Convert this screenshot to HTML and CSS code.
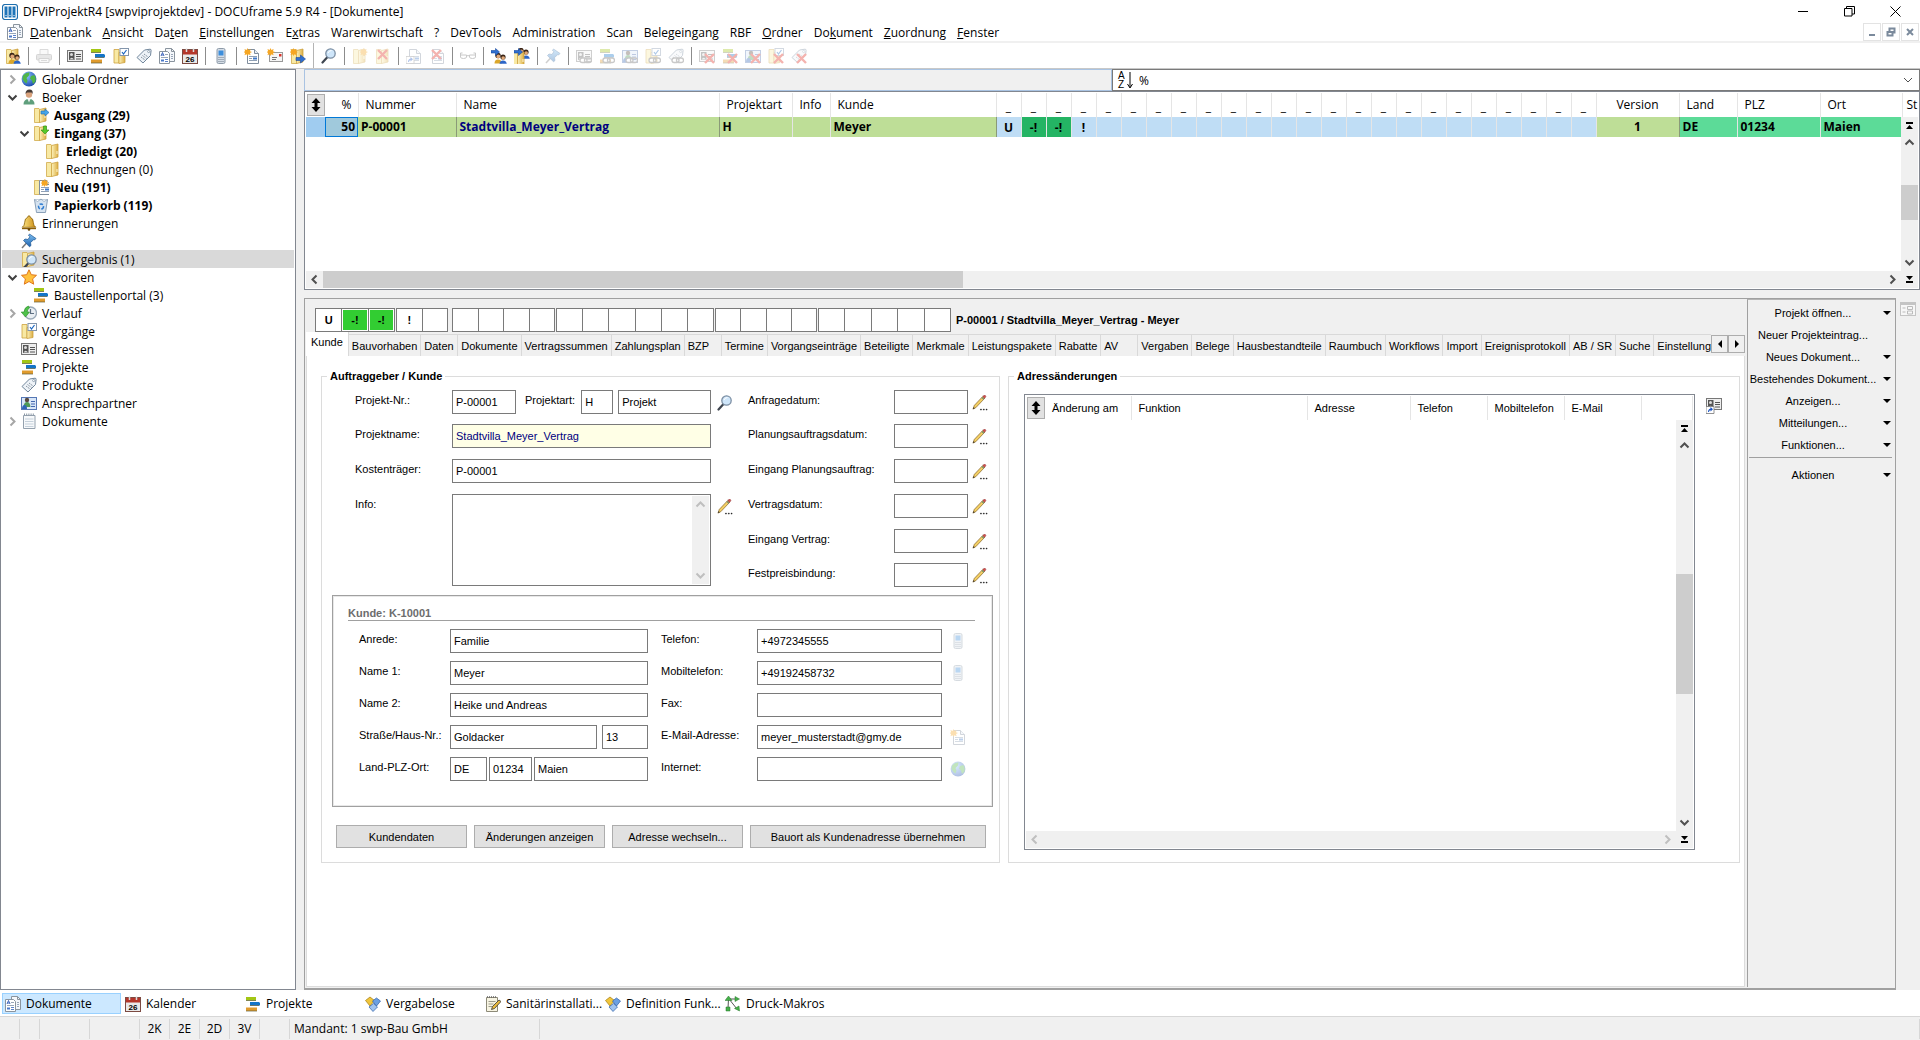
FILE: index.html
```html
<!DOCTYPE html>
<html lang="de">
<head>
  <meta charset="UTF-8">
  <meta name="viewport" content="width=device-width, initial-scale=1.0">
  <title>DFViProjektR4 [swpviprojektdev] - DOCUframe 5.9 R4 - [Dokumente]</title>
  <link rel="stylesheet" href="styles.css">
</head>
<body>

<!-- Icon set -->
<svg class="icon-set" aria-hidden="true">
  <defs>
    <linearGradient id="g-folder" x1="0" x2="1"><stop offset="0" stop-color="#fdf3bd"/><stop offset="1" stop-color="#dcae43"/></linearGradient>
    <linearGradient id="g-blue" x1="0" y1="0" x2="0" y2="1"><stop offset="0" stop-color="#7fc0f2"/><stop offset="1" stop-color="#1d62ae"/></linearGradient>
    <linearGradient id="g-gold" x1="0" x2="1"><stop offset="0" stop-color="#ffe98a"/><stop offset="1" stop-color="#c98a10"/></linearGradient>
    <radialGradient id="g-globe" cx=".35" cy=".3" r=".8"><stop offset="0" stop-color="#8cc4ff"/><stop offset="1" stop-color="#1442a8"/></radialGradient>
  </defs>
  <symbol id="app" viewBox="0 0 16 16"><rect x=".5" y=".5" width="15" height="15" rx="2.500" fill="#fff" stroke="#1f6fae" stroke-width="1.200"/><path d="M2.500 2.500h3v11h-3zM6.500 2.500h3v11h-3zM10.500 2.500h3v11h-3z" fill="#1f74b8"/><path d="M3.500 11.500h1M7.500 11.500h1M11.500 11.500h1" stroke="#fff"/></symbol>
  <symbol id="docs" viewBox="0 0 16 16"><path d="M6.500.5h6l3 3v10h-9z" fill="#f4f7fb" stroke="#8a949e"/><path d="M12.500.5v3h3" fill="none" stroke="#8a949e"/><path d="M.5 3.500h8l2 2v10H.5z" fill="#fff" stroke="#8a949e"/><path d="M2 8l1.500-3.500L5 8M2.500 7h2" fill="none" stroke="#2a55b5" stroke-width=".9"/><path d="M6 6.500h3M2 9.500h7M12 6.500h2M12 8.500h2M12 10.500h2" stroke="#9aa7b8"/><path d="M2 11.500h3v2H2z" fill="#4a78c8"/><path d="M6 11.500h3M6 13.500h3" stroke="#5b82c9"/></symbol>
  <symbol id="folder" viewBox="0 0 16 16"><path d="M1.500 1.500h4.500l1 1v13H1.500z" fill="#f8e9a4" stroke="#d2ab4b" stroke-width=".8"/><path d="M6.500 2.500L13 1v13l-6.500 1.500z" fill="url(#g-folder)" stroke="#cda240" stroke-width=".8"/><path d="M12 8v3" stroke="#fff8d8"/></symbol>
  <symbol id="check-folder" viewBox="0 0 16 16"><path d="M1 1.500h5v13.500H1z" fill="#f8e9a4" stroke="#cda240" stroke-width=".8"/><path d="M6 4.500h6v10L6 15.500z" fill="url(#g-folder)" stroke="#cda240" stroke-width=".8"/><rect x="7" y=".5" width="8.500" height="7" fill="#fff" stroke="#8395ab"/><path d="M9 4l1.500 2L13.500 2" fill="none" stroke="#1a66c0" stroke-width="1.200"/></symbol>
  <symbol id="card" viewBox="0 0 16 16"><rect x=".5" y="2.500" width="15" height="11" fill="#eee" stroke="#777"/><rect x="2" y="4" width="5.500" height="8" fill="#555"/><circle cx="4.500" cy="6.500" r="1.500" fill="#ddd"/><path d="M2.500 11.500q2-3.500 4.500 0z" fill="#ddd"/><path d="M9 6.500h5M9 8.500h5M9 11h5" stroke="#555"/></symbol>
  <symbol id="bars" viewBox="0 0 16 16"><path d="M1 1h10v3.500H1z" fill="#a3c614"/><path d="M5 6h9l1 1v2.500H5z" fill="#1475c9"/><path d="M1 11.500h11v3.500H1z" fill="#e09b2d"/><path d="M1 4.500h10M1 15h11M5 9.500h9" stroke="#5b5b3b" stroke-width=".7"/></symbol>
  <symbol id="tag" viewBox="0 0 16 16"><path d="M1 9.500L8.500 2l5.500-.8q1.200 0 1.100 1.200L14.500 7.500 7 15z" fill="#eef3f8" stroke="#71869b"/><circle cx="12.700" cy="3.500" r="1.100" fill="#fff" stroke="#71869b" stroke-width=".7"/><path d="M5 9l4 3M6.500 7.500l4 3M8 6l4 3" stroke="#7b8794" stroke-width=".9" stroke-dasharray="1.500 .7"/></symbol>
  <symbol id="calendar" viewBox="0 0 16 16"><rect x=".5" y="1.500" width="15" height="14" fill="#e9e9e9" stroke="#7c4a42"/><rect x="1" y="2" width="14" height="4.500" fill="#b5362a"/><path d="M4.500.5v3.500M11.500.5v3.500" stroke="#ddd" stroke-width="1.500"/></symbol>
  <symbol id="phone" viewBox="0 0 16 16"><rect x="4" y=".5" width="8" height="15" rx="1.500" fill="#d5dde6" stroke="#8d9aa8"/><rect x="5.500" y="2.500" width="5" height="5" fill="#3d8edb"/><path d="M5.500 9.500h5M5.500 11.500h5M5.500 13.500h5" stroke="#6c7b8b" stroke-dasharray="1 1"/></symbol>
  <symbol id="printer" viewBox="0 0 16 16"><path d="M4 1.500h8v5H4z" fill="#eee" stroke="#999"/><rect x=".5" y="6.500" width="15" height="5.500" rx="1" fill="#bbb" stroke="#888"/><path d="M3 10.500h10v4H3z" fill="#eee" stroke="#888"/><path d="M5 12.500h6" stroke="#999"/></symbol>
  <symbol id="doc" viewBox="0 0 16 16"><path d="M3.500 1.500h7l4 4v10h-11z" fill="#fff" stroke="#7f8d9d"/><path d="M10.500 1.500v4h4" fill="#e6edf5" stroke="#7f8d9d"/><path d="M5 8.500h8M5 10.500h3M5 12.500h8" stroke="#8fa0b5"/><path d="M9 9.500h4v2H9z" fill="#3f78c8"/></symbol>
  <symbol id="mail" viewBox="0 0 16 16"><rect x="2.500" y="4.500" width="13" height="9" fill="#f5f5f5" stroke="#999"/><path d="M5 9.500h5M5 11.500h4" stroke="#777"/><path d="M12 6h2.500v2.500H12z" fill="#d8342b"/></symbol>
  <symbol id="spark" viewBox="0 0 16 16"><path d="M3.500 0l.9 2L6.600.9 6 3.200l2 .8-2 .9.6 2.300-2.200-1L3.500 8l-.9-1.800-2.100 1 .6-2.300L-.5 4l1.600-.8L.5.900 2.600 2z" fill="#f5a623"/></symbol>
  <symbol id="lens" viewBox="0 0 16 16"><path d="M1.500 14.500L6.500 9" stroke="#3f4650" stroke-width="2.200" stroke-linecap="round"/><circle cx="9.500" cy="5.500" r="4.700" fill="#cfe6fa" stroke="#7b8ea3" stroke-width="1.300"/><path d="M7 5q1-2.500 3.500-2.500" fill="none" stroke="#fff"/></symbol>
  <symbol id="cross" viewBox="0 0 16 16"><path d="M3 2l9 9M12 2l-9 9" stroke="#e0281c" stroke-width="2.400"/></symbol>
  <symbol id="cross-low" viewBox="0 0 16 16"><path d="M6 6l9 9M15 6l-9 9" stroke="#e0281c" stroke-width="2.400"/></symbol>
  <symbol id="chain" viewBox="0 0 16 16"><rect x="4" y="10" width="7" height="4.500" rx="2.200" fill="#fff" stroke="#666" stroke-width="1.300"/><rect x="8.500" y="10" width="7" height="4.500" rx="2.200" fill="none" stroke="#666" stroke-width="1.300"/></symbol>
  <symbol id="arrow" viewBox="0 0 16 16"><path d="M6 9.500h4.500V7l5 4-5 4v-2.500H6z" fill="#2f6fd0" stroke="#1b4a9c" stroke-width=".6"/></symbol>
  <symbol id="arrow-top" viewBox="0 0 16 16"><path d="M0 2.500h4.500V.5L8.500 4l-4 3.500V5H0z" fill="#2f6fd0" stroke="#1b4a9c" stroke-width=".6"/></symbol>
  <symbol id="arrow-out" viewBox="0 0 16 16"><path d="M8 4h4V2l4 3.500L12 9V7H8z" fill="#46a5e8" stroke="#1d6db4" stroke-width=".6"/></symbol>
  <symbol id="arrow-in" viewBox="0 0 16 16"><path d="M10.500 1h3v4H16l-4 4-4-4h2.500z" fill="#57c92c" stroke="#318a12" stroke-width=".6"/></symbol>
  <symbol id="glasses" viewBox="0 0 16 16"><path d="M.5 7.500V5h2M15.500 7.500V5h-2M.5 7h6v2q0 1.500-3 1.500t-3-1.500zM9.500 7h6v2q0 1.500-3 1.500t-3-1.500zM6.500 8q1.500-1 3 0" fill="none" stroke="#666"/></symbol>
  <symbol id="people" viewBox="0 0 16 16"><circle cx="7" cy="7.500" r="2.700" fill="#3a2416"/><circle cx="7.300" cy="8.500" r="1.900" fill="#e0a878"/><path d="M3.500 15.500q0-4 3.500-4t4 4z" fill="#dba72b"/><circle cx="12" cy="9" r="2.600" fill="#3a2416"/><circle cx="12.200" cy="10" r="1.800" fill="#e0a878"/><path d="M8.500 15.700q.5-3.200 3.500-3.200t3.800 3.200z" fill="#2c66c8"/></symbol>
  <symbol id="pin" viewBox="0 0 16 16"><path d="M1 15l5-5.500" stroke="#777" stroke-width="1.500"/><path d="M8.500 1l6.500 4.500-1.500 1.500-1-.3-3 3 .5 2.800-1.500 1.300L2.500 7.500 4 6l3 .5L9 3.500 7.500 2.500z" fill="url(#g-blue)" stroke="#1d5590" stroke-width=".7"/></symbol>
  <symbol id="globe" viewBox="0 0 16 16"><circle cx="8" cy="8" r="7.400" fill="url(#g-globe)"/><path d="M2 4.500Q5 1 8.500 1.500L8 4.500 5.500 7l1 2.500-1 3Q3 11 1.500 8zM10 5l3.500-1q2 3 1 6.500L12 13l-1-3.500-2-2z" fill="#4fb548"/></symbol>
  <symbol id="person" viewBox="0 0 16 16"><path d="M2.500 15.500q0-5.500 5.500-5.500t5.500 5.500z" fill="#5f9f7c"/><path d="M6.500 10L8 13.500 9.500 10z" fill="#f4f4f4"/><circle cx="8" cy="5.500" r="3.200" fill="#d9a27c"/><path d="M4.500 5q0-4.500 4-4.500T11.500 5l-1-1.500H6z" fill="#453a35"/></symbol>
  <symbol id="bin" viewBox="0 0 16 16"><path d="M1.500 2.500h13l-2 13h-9z" fill="#d6e3f0" stroke="#8aa0b8"/><path d="M1.500 2.500l3 2 3.500-2.500 3 2.500 3.500-2" fill="#fff" stroke="#8aa0b8" stroke-width=".7"/><circle cx="8" cy="9.500" r="2.500" fill="none" stroke="#2b7ad0" stroke-width="1.500" stroke-dasharray="3.500 1.500"/></symbol>
  <symbol id="bell" viewBox="0 0 16 16"><path d="M8 .8q1.300 0 1.300 1.500 3 1 3 5 0 3.500 2.500 5H1.200q2.500-1.500 2.500-5 0-4 3-5Q6.700.8 8 .8z" fill="url(#g-gold)" stroke="#8c5f08" stroke-width=".8"/><path d="M1 13h14v1.200H1z" fill="#8c5f08"/><circle cx="8" cy="14.500" r="1.300" fill="#6f4a05"/></symbol>
  <symbol id="star" viewBox="0 0 16 16"><path d="M8 .8l2.300 4.900 5.200.6-3.900 3.600 1.100 5.300L8 12.500l-4.700 2.700 1.100-5.300L.5 6.300l5.200-.6z" fill="#ffc23e" stroke="#e0761a"/></symbol>
  <symbol id="history" viewBox="0 0 16 16"><circle cx="9.500" cy="8" r="6" fill="#e8edf2" stroke="#9aa9b8" stroke-width="1.300"/><path d="M9.500 4v4.500h3.500" fill="none" stroke="#5d6f82" stroke-width="1.200"/><path d="M7.500 1Q3.500 2 3 7H.2l4.300 5 4-5H6.200Q6 4.500 8.500 3z" fill="#4fc14a" stroke="#2c8a2c" stroke-width=".6"/></symbol>
  <symbol id="contact" viewBox="0 0 16 16"><rect x=".5" y="2.500" width="15" height="12" fill="#d8e6f8" stroke="#5577b5"/><path d="M10 6.500h4M10 9h4M10 11.500h4" stroke="#4468ae"/><circle cx="6" cy="5" r="2.200" fill="#5a4a40"/><path d="M2.500 12q.5-5 3.500-5t3.500 5z" fill="#4f9a55"/><path d="M1 14q0-4 2.500-4T6 14z" fill="#2f65b8"/></symbol>
  <symbol id="pad" viewBox="0 0 16 16"><path d="M2.500 2.500h11.500v13H2.500z" fill="#f7f9fb" stroke="#94a1ae"/><path d="M3 1.500h11" stroke="#8b98a5" stroke-width="2" stroke-dasharray="1 1.200"/><path d="M4 6h8.500M4 8.500h8.500M4 11h8.500M4 13.500h8.500" stroke="#b9c6d3" stroke-width=".8"/></symbol>
  <symbol id="cubes" viewBox="0 0 16 16"><path d="M5 1l4.500 3.500L5 10 .5 4.500z" fill="#f0c53a" stroke="#a27b10" stroke-width=".7"/><path d="M11.500 2l4 3-4 5-4-5z" fill="#6ba0e2" stroke="#2c5ea6" stroke-width=".7"/><path d="M8.500 7.500l4 3.500-4.500 4.500L4 11z" fill="#9fc3ee" stroke="#2c5ea6" stroke-width=".7"/></symbol>
  <symbol id="pencil" viewBox="0 0 17 17"><path d="M1 15l1.500-4L11.500 1.500l2 2L4 13.500z" fill="#f3cf63" stroke="#7d5c24" stroke-width=".7"/><path d="M11.500 1.500L13 .3q1.500-.1 1.700 1.400L13.500 3.500z" fill="#d94c4c" stroke="#8a3333" stroke-width=".6"/><path d="M10.500 2.500l2 2" stroke="#6d8a6d" stroke-width="1.200"/><path d="M1 15l.8-2 1.200 1z" fill="#222"/><path d="M9 15h1v1H9zM12 15h1v1h-1zM15 15h1v1h-1z" fill="#222" stroke="#222" stroke-width=".5"/></symbol>
  <symbol id="edit-doc" viewBox="0 0 16 16"><path d="M1.500 1.500h11v14h-11z" fill="#f7f4e2" stroke="#8d8a78"/><path d="M2 1h10" stroke="#666" stroke-width="1.500" stroke-dasharray="1 1"/><path d="M3.500 5.500h7M3.500 8h5M3.500 10.500h4" stroke="#9a9a8c"/><path d="M6.500 13.500l1-3L14 4l2 1.500-6.500 7z" fill="#e8b93c" stroke="#333" stroke-width=".8"/></symbol>
  <symbol id="macro" viewBox="0 0 16 16"><path d="M3.500 2.500L3 12.500M4 3l8 10M4 3h9" fill="none" stroke="#555"/><path d="M0 4.500L3.500 0 7 4.500zM10 .5L14.500 3 10 5.500zM9.500 12.500l5 2.500-.5-5zM1 11h4v4H1z" fill="#46b04a" stroke="#27762b" stroke-width=".5"/></symbol>
  <symbol id="shortcut" viewBox="0 0 16 16"><path d="M0 8.500h8v7H0z" fill="#fff" stroke="#777" stroke-width=".8"/><path d="M2 14q0-3 2.500-3.500V9L7 11.200 4.500 13.500V12Q3 12.500 3 14z" fill="#1c55c4"/></symbol>
  <symbol id="layout" viewBox="0 0 16 14"><rect x=".5" y=".5" width="15" height="13" fill="#f7f7f7" stroke="#c4c4c4"/><path d="M1 2h14" stroke="#c4c4c4" stroke-width="2"/><path d="M2.500 6h3M2.500 10h3" stroke="#bbb"/><path d="M7.500 4.500h5v3h-5zM7.500 9h5v3h-5z" fill="none" stroke="#bbb"/></symbol>
  <symbol id="sort" viewBox="0 0 10 14"><path d="M5 0l4.500 5H6.500v4h3L5 14 .5 9h3V5h-3z" fill="#000"/></symbol>
  <symbol id="up" viewBox="0 0 17 17"><path d="M4.500 10.500l4-4 4 4" fill="none" stroke="currentColor" stroke-width="2"/></symbol>
  <symbol id="down" viewBox="0 0 17 17"><path d="M4.500 6.500l4 4 4-4" fill="none" stroke="currentColor" stroke-width="2"/></symbol>
  <symbol id="left" viewBox="0 0 17 17"><path d="M10.500 4.500l-4 4 4 4" fill="none" stroke="currentColor" stroke-width="2"/></symbol>
  <symbol id="right" viewBox="0 0 17 17"><path d="M6.500 4.500l4 4-4 4" fill="none" stroke="currentColor" stroke-width="2"/></symbol>
  <symbol id="first" viewBox="0 0 17 17"><path d="M5 5h7v2H5zM8.500 8l3.500 4H5z" fill="#000"/></symbol>
  <symbol id="last" viewBox="0 0 17 17"><path d="M5 10h7v2H5zM8.500 9L5 5h7z" fill="#000"/></symbol>
</svg>

<div class="window">

  <header class="title-bar">
    <svg class="icon"><use href="#app"/></svg>
    <span>DFViProjektR4 [swpviprojektdev] - DOCUframe 5.9 R4 - [Dokumente]</span>
    <div class="window-buttons">
      <button aria-label="Minimieren"><svg viewBox="0 0 11 11"><path d="M0 5.500h10"/></svg></button>
      <button aria-label="Wiederherstellen"><svg viewBox="0 0 11 11"><path d="M.5 2.500h7.500v7.500H.5zM2.500 2.500V.5h8v7.500H8"/></svg></button>
      <button aria-label="Schließen"><svg viewBox="0 0 11 11"><path d="M.5.500l10 10M10.500.500l-10 10"/></svg></button>
    </div>
  </header>

  <nav class="menu-bar">
    <svg class="icon"><use href="#docs"/></svg>
    <button><u>D</u>atenbank</button>
    <button><u>A</u>nsicht</button>
    <button>Da<u>t</u>en</button>
    <button><u>E</u>instellungen</button>
    <button>E<u>x</u>tras</button>
    <button>Warenwirtschaft</button>
    <button>?</button>
    <button>DevTools</button>
    <button>Administration</button>
    <button>Scan</button>
    <button>Belegeingang</button>
    <button>RBF</button>
    <button><u>O</u>rdner</button>
    <button>Do<u>k</u>ument</button>
    <button><u>Z</u>uordnung</button>
    <button><u>F</u>enster</button>
    <div class="child-buttons">
      <button aria-label="Fenster minimieren"><svg viewBox="0 0 10 10"><path d="M2 8h6"/></svg></button>
      <button aria-label="Fenster wiederherstellen"><svg viewBox="0 0 10 10"><path d="M1.500 5h5v3.500h-5zM3.500 4V1.500h5v4H7.500"/></svg></button>
      <button aria-label="Fenster schließen"><svg viewBox="0 0 10 10"><path d="M2 2l6 6M8 2L2 8"/></svg></button>
    </div>
  </nav>

  <div class="toolbar">
    <button aria-label="Benutzer"><svg class="icon"><use href="#folder"/><use href="#people"/></svg></button>
    <hr>
    <button aria-label="Drucken" disabled><svg class="icon"><use href="#printer"/></svg></button>
    <hr>
    <button aria-label="Adressen"><svg class="icon"><use href="#card"/></svg></button>
    <button aria-label="Projekte"><svg class="icon"><use href="#bars"/></svg></button>
    <button aria-label="Vorgänge"><svg class="icon"><use href="#check-folder"/></svg></button>
    <button aria-label="Produkte"><svg class="icon"><use href="#tag"/></svg></button>
    <button aria-label="Dokumente"><svg class="icon"><use href="#docs"/></svg></button>
    <button aria-label="Kalender"><svg class="icon calendar" viewBox="0 0 16 16"><use href="#calendar"/><text x="8" y="14">26</text></svg></button>
    <hr>
    <button aria-label="Telefon"><svg class="icon"><use href="#phone"/></svg></button>
    <hr>
    <button aria-label="Neues Dokument"><svg class="icon"><use href="#doc"/><use href="#spark"/></svg></button>
    <button aria-label="Neue E-Mail"><svg class="icon"><use href="#mail"/><use href="#spark"/></svg></button>
    <button aria-label="Neuer Vorgang"><svg class="icon"><use href="#folder"/><use href="#spark"/><use href="#arrow"/></svg></button>
    <hr class="tall">
    <button aria-label="Suchen"><svg class="icon"><use href="#lens"/></svg></button>
    <hr>
    <button aria-label="Neuer Ordner" disabled><svg class="icon"><use href="#folder"/><use href="#spark" x="8"/></svg></button>
    <button aria-label="Ordner löschen" disabled><svg class="icon"><use href="#folder"/><use href="#cross"/></svg></button>
    <hr>
    <button aria-label="Verknüpfung" disabled><svg class="icon"><use href="#doc"/><use href="#shortcut"/></svg></button>
    <button aria-label="Dokument löschen" disabled><svg class="icon"><use href="#doc"/><use href="#cross"/></svg></button>
    <hr>
    <button aria-label="Ansehen" disabled><svg class="icon"><use href="#glasses"/></svg></button>
    <hr>
    <button aria-label="Weiterleiten"><svg class="icon"><use href="#people"/><use href="#arrow-top"/></svg></button>
    <button aria-label="Verteilen"><svg class="icon"><use href="#people" y="-5"/><use href="#folder" x="-3" y="3"/><use href="#arrow-top"/></svg></button>
    <hr>
    <button aria-label="Anheften" disabled><svg class="icon"><use href="#pin"/></svg></button>
    <hr>
    <button aria-label="Adresse zuordnen" disabled><svg class="icon"><use href="#card"/><use href="#chain"/></svg></button>
    <button aria-label="Projekt zuordnen" disabled><svg class="icon"><use href="#bars"/><use href="#chain"/></svg></button>
    <button aria-label="Ansprechpartner zuordnen" disabled><svg class="icon"><use href="#contact"/><use href="#chain"/></svg></button>
    <button aria-label="Vorgang zuordnen" disabled><svg class="icon"><use href="#check-folder"/><use href="#chain"/></svg></button>
    <button aria-label="Produkt zuordnen" disabled><svg class="icon"><use href="#tag"/><use href="#chain"/></svg></button>
    <hr>
    <button aria-label="Adresse lösen" disabled><svg class="icon"><use href="#card"/><use href="#cross-low"/></svg></button>
    <button aria-label="Projekt lösen" disabled><svg class="icon"><use href="#bars"/><use href="#cross-low"/></svg></button>
    <button aria-label="Ansprechpartner lösen" disabled><svg class="icon"><use href="#contact"/><use href="#cross-low"/></svg></button>
    <button aria-label="Vorgang lösen" disabled><svg class="icon"><use href="#check-folder"/><use href="#cross-low"/></svg></button>
    <button aria-label="Produkt lösen" disabled><svg class="icon"><use href="#tag"/><use href="#cross-low"/></svg></button>
  </div>

  <main class="workspace">

    <ul class="tree">
      <li><svg class="twist closed"><use href="#right"/></svg><svg class="icon"><use href="#globe"/></svg><a href="#">Globale Ordner</a></li>
      <li><svg class="twist"><use href="#down"/></svg><svg class="icon"><use href="#person"/></svg><a href="#">Boeker</a></li>
      <li class="level-2 unread"><span class="twist"></span><svg class="icon"><use href="#folder"/><use href="#arrow-out"/></svg><a href="#">Ausgang (29)</a></li>
      <li class="level-2 unread"><svg class="twist"><use href="#down"/></svg><svg class="icon"><use href="#folder"/><use href="#arrow-in"/></svg><a href="#">Eingang (37)</a></li>
      <li class="level-3 unread"><span class="twist"></span><svg class="icon"><use href="#folder"/></svg><a href="#">Erledigt (20)</a></li>
      <li class="level-3"><span class="twist"></span><svg class="icon"><use href="#folder"/></svg><a href="#">Rechnungen (0)</a></li>
      <li class="level-2 unread"><span class="twist"></span><svg class="icon"><use href="#folder"/><use href="#doc" x="3"/><use href="#spark" x="8"/></svg><a href="#">Neu (191)</a></li>
      <li class="level-2 unread"><span class="twist"></span><svg class="icon"><use href="#bin"/></svg><a href="#">Papierkorb (119)</a></li>
      <li><span class="twist"></span><svg class="icon"><use href="#bell"/></svg><a href="#">Erinnerungen</a></li>
      <li><span class="twist"></span><svg class="icon"><use href="#pin"/></svg></li>
      <li class="selected"><span class="twist"></span><svg class="icon"><use href="#folder"/><use href="#lens" x="1" y="3"/></svg><a href="#">Suchergebnis (1)</a></li>
      <li><svg class="twist"><use href="#down"/></svg><svg class="icon"><use href="#star"/></svg><a href="#">Favoriten</a></li>
      <li class="level-2"><span class="twist"></span><svg class="icon"><use href="#bars"/></svg><a href="#">Baustellenportal (3)</a></li>
      <li><svg class="twist closed"><use href="#right"/></svg><svg class="icon"><use href="#history"/></svg><a href="#">Verlauf</a></li>
      <li><span class="twist"></span><svg class="icon"><use href="#check-folder"/></svg><a href="#">Vorgänge</a></li>
      <li><span class="twist"></span><svg class="icon"><use href="#card"/></svg><a href="#">Adressen</a></li>
      <li><span class="twist"></span><svg class="icon"><use href="#bars"/></svg><a href="#">Projekte</a></li>
      <li><span class="twist"></span><svg class="icon"><use href="#tag"/></svg><a href="#">Produkte</a></li>
      <li><span class="twist"></span><svg class="icon"><use href="#contact"/></svg><a href="#">Ansprechpartner</a></li>
      <li><svg class="twist closed"><use href="#right"/></svg><svg class="icon"><use href="#pad"/></svg><a href="#">Dokumente</a></li>
    </ul>

    <section class="content">

      <div class="filter-row">
        <div class="filter-info"></div>
        <div class="sort-box">
          <div class="az"><span>A</span><span>Z</span></div>
          <svg class="az-arrow" viewBox="0 0 6 18"><path d="M3 1v15M.5 13L3 17l2.500-4"/></svg>
          <select aria-label="Sortierung"><option>%</option></select>
          <svg class="chevron" viewBox="0 0 10 6"><path d="M1 1l4 4 4-4"/></svg>
        </div>
      </div>

      <div class="list results">
        <table>
          <colgroup>
            <col class="c-sort"><col class="c-percent"><col class="c-number"><col class="c-name"><col class="c-type"><col class="c-info"><col class="c-customer">
            <col class="c-flag" span="24">
            <col class="c-version"><col class="c-country"><col class="c-zip"><col class="c-city"><col>
          </colgroup>
          <thead>
            <tr>
              <th class="sort"><button aria-label="Sortieren"><svg><use href="#sort"/></svg></button></th>
              <th class="right">%</th><th>Nummer</th><th>Name</th><th>Projektart</th><th>Info</th><th>Kunde</th>
              <th class="flag">_</th><th class="flag">_</th><th class="flag">_</th><th class="flag">_</th><th class="flag">_</th><th class="flag">_</th>
              <th class="flag">_</th><th class="flag">_</th><th class="flag">_</th><th class="flag">_</th><th class="flag">_</th><th class="flag">_</th>
              <th class="flag">_</th><th class="flag">_</th><th class="flag">_</th><th class="flag">_</th><th class="flag">_</th><th class="flag">_</th>
              <th class="flag">_</th><th class="flag">_</th><th class="flag">_</th><th class="flag">_</th><th class="flag">_</th><th class="flag">_</th>
              <th class="center">Version</th><th>Land</th><th>PLZ</th><th>Ort</th><th class="cut">St</th>
            </tr>
          </thead>
          <tbody>
            <tr>
              <td class="marker"></td>
              <td class="focused">50</td>
              <td class="edge">P-00001</td>
              <td class="edge project-name">Stadtvilla_Meyer_Vertrag</td>
              <td>H</td>
              <td></td>
              <td class="edge">Meyer</td>
              <td class="flag">U</td><td class="flag on">-!</td><td class="flag on">-!</td><td class="flag">!</td><td class="flag"></td><td class="flag"></td>
              <td class="flag"></td><td class="flag"></td><td class="flag"></td><td class="flag"></td><td class="flag"></td><td class="flag"></td>
              <td class="flag"></td><td class="flag"></td><td class="flag"></td><td class="flag"></td><td class="flag"></td><td class="flag"></td>
              <td class="flag"></td><td class="flag"></td><td class="flag"></td><td class="flag"></td><td class="flag"></td><td class="flag"></td>
              <td class="edge center">1</td>
              <td class="place">DE</td><td class="place">01234</td><td class="place">Maien</td>
              <td class="blank"></td>
            </tr>
          </tbody>
        </table>
        <div class="scroll-y">
          <svg><use href="#first"/></svg><svg><use href="#up"/></svg>
          <div class="track"><div class="thumb"></div></div>
          <svg><use href="#down"/></svg><svg><use href="#last"/></svg>
        </div>
        <div class="scroll-x">
          <svg><use href="#left"/></svg>
          <div class="track"><div class="thumb" style="width: 41%"></div></div>
          <svg><use href="#right"/></svg>
        </div>
      </div>

      <div class="detail">
        <div class="form-panel">

          <div class="form-main">
            <div class="form-head">
              <div class="flags">
                <div><input value="U" aria-label="Status 1"><input class="on" value="-!" aria-label="Status 2"><input class="on" value="-!" aria-label="Status 3"></div>
                <div><input value="!" aria-label="Status 4"><input aria-label="Status 5"></div>
                <div><input aria-label="Status 6"><input aria-label="Status 7"><input aria-label="Status 8"><input aria-label="Status 9"></div>
                <div><input aria-label="Status 10"><input aria-label="Status 11"><input aria-label="Status 12"><input aria-label="Status 13"><input aria-label="Status 14"><input aria-label="Status 15"></div>
                <div><input aria-label="Status 16"><input aria-label="Status 17"><input aria-label="Status 18"><input aria-label="Status 19"></div>
                <div><input aria-label="Status 20"><input aria-label="Status 21"><input aria-label="Status 22"><input aria-label="Status 23"><input aria-label="Status 24"></div>
              </div>
              <strong>P-00001 / Stadtvilla_Meyer_Vertrag - Meyer</strong>
            </div>

            <div class="tabs">
              <div class="tab-strip">
                <button class="active">Kunde</button>
                <button>Bauvorhaben</button>
                <button>Daten</button>
                <button>Dokumente</button>
                <button>Vertragssummen</button>
                <button>Zahlungsplan</button>
                <button>BZP</button>
                <button>Termine</button>
                <button>Vorgangseinträge</button>
                <button>Beteiligte</button>
                <button>Merkmale</button>
                <button>Leistungspakete</button>
                <button>Rabatte</button>
                <button>AV</button>
                <button>Vergaben</button>
                <button>Belege</button>
                <button>Hausbestandteile</button>
                <button>Raumbuch</button>
                <button>Workflows</button>
                <button>Import</button>
                <button>Ereignisprotokoll</button>
                <button>AB / SR</button>
                <button>Suche</button>
                <button>Einstellungen</button>
              </div>
              <button class="tab-arrow" aria-label="Zurück"><svg viewBox="0 0 4 8"><path d="M4 0v8L0 4z"/></svg></button>
              <button class="tab-arrow" aria-label="Weiter"><svg viewBox="0 0 4 8"><path d="M0 0v8l4-4z"/></svg></button>
            </div>

            <div class="tab-page">
              <fieldset class="client">
                <legend>Auftraggeber / Kunde</legend>
                <div class="project">
                  <div class="project-fields">
                    <label for="nr">Projekt-Nr.:</label>
                    <div class="line">
                      <input id="nr" class="w-nr" value="P-00001">
                      <label for="art">Projektart:</label>
                      <input id="art" class="w-art" value="H">
                      <input class="grow" aria-label="Projektart Bezeichnung" value="Projekt">
                    </div>
                    <button aria-label="Projektart suchen"><svg class="icon"><use href="#lens"/></svg></button>

                    <label for="name">Projektname:</label>
                    <input id="name" class="highlighted" value="Stadtvilla_Meyer_Vertrag">
                    <span></span>

                    <label for="cost">Kostenträger:</label>
                    <input id="cost" value="P-00001">
                    <span></span>

                    <label for="info">Info:</label>
                    <div class="memo">
                      <textarea id="info"></textarea>
                      <div class="memo-scroll"><svg><use href="#up"/></svg><svg><use href="#down"/></svg></div>
                    </div>
                    <button aria-label="Info bearbeiten"><svg class="icon"><use href="#pencil"/></svg></button>
                  </div>

                  <div class="dates">
                    <label for="d1">Anfragedatum:</label><input id="d1"><button aria-label="Anfragedatum bearbeiten"><svg class="icon"><use href="#pencil"/></svg></button>
                    <label for="d2">Planungsauftragsdatum:</label><input id="d2"><button aria-label="Planungsauftragsdatum bearbeiten"><svg class="icon"><use href="#pencil"/></svg></button>
                    <label for="d3">Eingang Planungsauftrag:</label><input id="d3"><button aria-label="Eingang Planungsauftrag bearbeiten"><svg class="icon"><use href="#pencil"/></svg></button>
                    <label for="d4">Vertragsdatum:</label><input id="d4"><button aria-label="Vertragsdatum bearbeiten"><svg class="icon"><use href="#pencil"/></svg></button>
                    <label for="d5">Eingang Vertrag:</label><input id="d5"><button aria-label="Eingang Vertrag bearbeiten"><svg class="icon"><use href="#pencil"/></svg></button>
                    <label for="d6">Festpreisbindung:</label><input id="d6"><button aria-label="Festpreisbindung bearbeiten"><svg class="icon"><use href="#pencil"/></svg></button>
                  </div>
                </div>

                <section class="customer">
                  <h2>Kunde: K-10001</h2>
                  <div class="customer-fields">
                    <label for="anrede">Anrede:</label>
                    <input id="anrede" value="Familie">
                    <label for="tel">Telefon:</label>
                    <input id="tel" value="+4972345555">
                    <button aria-label="Telefon anrufen" disabled><svg class="icon"><use href="#phone"/></svg></button>

                    <label for="name1">Name 1:</label>
                    <input id="name1" value="Meyer">
                    <label for="mobil">Mobiltelefon:</label>
                    <input id="mobil" value="+49192458732">
                    <button aria-label="Mobiltelefon anrufen" disabled><svg class="icon"><use href="#phone"/></svg></button>

                    <label for="name2">Name 2:</label>
                    <input id="name2" value="Heike und Andreas">
                    <label for="fax">Fax:</label>
                    <input id="fax">
                    <span></span>

                    <label for="street">Straße/Haus-Nr.:</label>
                    <div class="line"><input id="street" class="grow" value="Goldacker"><input class="w-house" aria-label="Haus-Nr." value="13"></div>
                    <label for="mail-address">E-Mail-Adresse:</label>
                    <input id="mail-address" value="meyer_musterstadt@gmy.de">
                    <button aria-label="E-Mail schreiben" disabled><svg class="icon"><use href="#doc"/><use href="#spark"/></svg></button>

                    <label for="land">Land-PLZ-Ort:</label>
                    <div class="line place-line"><input id="land" class="w-land" value="DE"><input class="w-zip" aria-label="PLZ" value="01234"><input class="grow" aria-label="Ort" value="Maien"></div>
                    <label for="web">Internet:</label>
                    <input id="web">
                    <button aria-label="Internetseite öffnen" disabled><svg class="icon"><use href="#globe"/></svg></button>
                  </div>
                </section>

                <div class="actions">
                  <button>Kundendaten</button>
                  <button>Änderungen anzeigen</button>
                  <button>Adresse wechseln...</button>
                  <button class="long">Bauort als Kundenadresse übernehmen</button>
                </div>
              </fieldset>

              <fieldset class="changes">
                <legend>Adressänderungen</legend>
                <div class="changes-body">
                  <div class="list">
                    <table>
                      <colgroup><col class="c-sort"><col class="c-changed"><col class="c-function"><col class="c-address"><col class="c-phone"><col class="c-phone"><col class="c-phone"><col></colgroup>
                      <thead>
                        <tr>
                          <th class="sort"><button aria-label="Sortieren"><svg><use href="#sort"/></svg></button></th>
                          <th>Änderung am</th><th>Funktion</th><th>Adresse</th><th>Telefon</th><th>Mobiltelefon</th><th>E-Mail</th><th></th>
                        </tr>
                      </thead>
                    </table>
                    <div class="scroll-y">
                      <svg><use href="#first"/></svg><svg><use href="#up"/></svg>
                      <div class="track"><div class="thumb"></div></div>
                      <svg><use href="#down"/></svg><svg><use href="#last"/></svg>
                    </div>
                    <div class="scroll-x inactive">
                      <svg><use href="#left"/></svg>
                      <div class="track"></div>
                      <svg><use href="#right"/></svg>
                    </div>
                  </div>
                  <button aria-label="Adresse öffnen"><svg class="icon"><use href="#card" y="-2"/><use href="#shortcut"/></svg></button>
                </div>
              </fieldset>
            </div>
          </div>

          <aside class="commands">
            <button class="more">Projekt öffnen...</button>
            <button>Neuer Projekteintrag...</button>
            <button class="more">Neues Dokument...</button>
            <button class="more">Bestehendes Dokument...</button>
            <button class="more">Anzeigen...</button>
            <button class="more">Mitteilungen...</button>
            <button class="more">Funktionen...</button>
            <hr>
            <button class="more">Aktionen</button>
          </aside>
        </div>
        <div class="strip"><button aria-label="Layout"><svg><use href="#layout"/></svg></button></div>
      </div>
    </section>
  </main>

  <nav class="task-bar">
    <a href="#" class="active"><svg class="icon"><use href="#docs"/></svg>Dokumente</a>
    <a href="#"><svg class="icon calendar" viewBox="0 0 16 16"><use href="#calendar"/><text x="8" y="14">26</text></svg>Kalender</a>
    <a href="#"><svg class="icon"><use href="#bars"/></svg>Projekte</a>
    <a href="#"><svg class="icon"><use href="#cubes"/></svg>Vergabelose</a>
    <a href="#"><svg class="icon"><use href="#edit-doc"/></svg>Sanitärinstallati...</a>
    <a href="#"><svg class="icon"><use href="#cubes"/></svg>Definition Funk...</a>
    <a href="#"><svg class="icon"><use href="#macro"/></svg>Druck-Makros</a>
  </nav>

  <footer class="status-bar">
    <span></span><span></span><span></span><span></span>
    <span>2K</span><span>2E</span><span>2D</span><span>3V</span><span></span>
    <span class="mandant">Mandant: 1 swp-Bau GmbH</span>
    <span></span>
  </footer>
</div>

</body>
</html>
```
FILE: styles.css
```css
* {
  box-sizing: border-box;
}

body {
  margin: 0;
  font-family: "Open Sans", sans-serif;
  font-size: 12px;
  color: #000;
  background-color: #fff;
}

button {
  padding: 0;
  border: none;
  background: none;
  font: inherit;
  color: inherit;
  white-space: nowrap;
}

button:disabled svg {
  opacity: 0.35;
}

a {
  color: inherit;
  text-decoration: none;
}

svg {
  display: block;
  flex: none;
}

.icon-set {
  position: absolute;
  width: 0;
  height: 0;
}

.icon {
  width: 16px;
  height: 16px;
}

.calendar {
  overflow: visible;
}

.calendar text {
  font: bold 8px "Liberation Sans", sans-serif;
  text-anchor: middle;
}

.window {
  display: flex;
  flex-direction: column;
  height: 100vh;
  min-height: 1000px;
}

/* Title and menu */
.title-bar {
  display: flex;
  align-items: center;
  gap: 5px;
  height: 23px;
  padding-left: 2px;
}

.window-buttons {
  display: flex;
  gap: 35px;
  margin-left: auto;
  padding-right: 19px;
}

.window-buttons svg {
  width: 11px;
  height: 11px;
  fill: none;
  stroke: #000;
}

.menu-bar {
  display: flex;
  align-items: center;
  gap: 11px;
  height: 20px;
  padding-left: 7px;
  border-bottom: 2px solid #f0f0f0;
}

.menu-bar .icon {
  margin-right: -4px;
}

.child-buttons {
  display: flex;
  gap: 1px;
  margin-left: auto;
  padding-right: 1px;
}

.child-buttons button {
  display: flex;
  align-items: center;
  justify-content: center;
  width: 18px;
  height: 18px;
  border: 1px solid #e3e3e3;
}

.child-buttons svg {
  width: 10px;
  height: 10px;
  fill: none;
  stroke: #7b8a9c;
  stroke-width: 2;
}

.toolbar {
  display: flex;
  align-items: center;
  gap: 7px;
  height: 26px;
  padding-left: 5px;
  border-bottom: 1px solid #c8c8c8;
}

.toolbar hr {
  width: 1px;
  height: 18px;
  margin: 0;
  border: none;
  background-color: #8c8c8c;
}

.toolbar hr.tall {
  height: 25px;
  background-color: #b4b4b4;
}

/* Folder tree */
.workspace {
  display: grid;
  grid-template-columns: 296px minmax(0, 1fr);
  gap: 8px;
  flex: 1;
  min-height: 0;
  background-color: #f0f0f0;
}

.tree {
  margin: 0;
  padding: 0 1px;
  border: 1px solid #828790;
  background-color: #fff;
  list-style: none;
}

.tree li {
  display: flex;
  align-items: center;
  height: 18px;
  padding-left: 2px;
}

.tree a {
  margin-left: 5px;
}

.tree .level-2 {
  padding-left: 14px;
}

.tree .level-3 {
  padding-left: 26px;
}

.tree .unread {
  font-weight: bold;
}

.tree .selected {
  background-color: #d9d9d9;
}

.twist {
  width: 17px;
  height: 17px;
  color: #404040;
}

.twist.closed {
  color: #a6a6a6;
}

/* Result list */
.content {
  display: flex;
  flex-direction: column;
}

.filter-row {
  display: grid;
  grid-template-columns: 1fr 1fr;
  height: 22px;
}

.filter-info {
  border: 1px solid #a9c3e2;
}

.sort-box {
  display: flex;
  align-items: center;
  padding: 0 6px 0 5px;
  border: 1px solid #7a7a7a;
  background-color: #fff;
}

.sort-box select {
  flex: 1;
  height: 18px;
  margin-left: 6px;
  padding: 0;
  border: none;
  background: none;
  font: inherit;
  appearance: none;
}

.az {
  display: flex;
  flex-direction: column;
  width: 9px;
  font-family: "Liberation Sans", Arial, sans-serif;
  font-size: 10px;
  line-height: 9px;
}

.az-arrow {
  width: 6px;
  height: 18px;
  fill: none;
  stroke: #000;
}

.chevron {
  width: 10px;
  height: 6px;
  fill: none;
  stroke: #505050;
}

.list {
  display: grid;
  grid-template-columns: minmax(0, 1fr) 17px;
  grid-template-rows: 1fr 17px;
  padding: 1px;
  border: 1px solid #828790;
  background-color: #fff;
}

.results {
  height: 199px;
}

table {
  grid-area: 1 / 1 / 2 / 3;
  align-self: start;
  width: 100%;
  table-layout: fixed;
  border-collapse: collapse;
}

th {
  height: 24px;
  padding: 0 0 1px 7px;
  border-right: 1px solid #e5e5e5;
  font-weight: normal;
  text-align: left;
  white-space: nowrap;
}

th.right {
  padding: 0 6px 1px 0;
  text-align: right;
}

th.center,
td.center {
  padding: 0 0 1px;
  text-align: center;
}

th.sort {
  padding: 1px;
  border: none;
}

.sort button {
  display: flex;
  align-items: center;
  justify-content: center;
  width: 18px;
  height: 22px;
  border: 1px solid #adadad;
  background-color: #e1e1e1;
}

.sort svg {
  width: 10px;
  height: 14px;
}

th.flag,
td.flag {
  padding: 0;
  text-align: center;
}

th.flag {
  padding-top: 2px;
}

th.cut {
  overflow: hidden;
  padding-left: 4px;
  border: none;
}

td {
  height: 20px;
  padding: 0 0 1px 3px;
  border-right: 1px solid #e5e5e5;
  background-color: #bede97;
  font-weight: bold;
  white-space: nowrap;
}

td.marker {
  border: none;
  background-color: #a0ccf0;
}

td.focused {
  padding: 0 3px 1px 0;
  border: none;
  outline: 1px solid #0078d7;
  outline-offset: -1px;
  background-color: #a0c9dc;
  text-align: right;
}

td.edge {
  border-right-color: #8a9a78;
}

td.project-name {
  color: #000080;
}

td.flag {
  background-color: #bfddf5;
}

td.on {
  background-color: #24b464;
}

td.place {
  background-color: #5cdb98;
}

td.blank {
  border: none;
  background: none;
}

.c-sort { width: 19px; }
.c-percent { width: 33px; }
.c-number { width: 98px; }
.c-name { width: 263px; }
.c-type { width: 73px; }
.c-info { width: 38px; }
.c-customer { width: 166px; }
.c-flag { width: 25px; }
.c-version { width: 83px; }
.c-country { width: 58px; }
.c-zip { width: 83px; }
.c-city { width: 82px; }
.c-changed { width: 86px; }
.c-function { width: 176px; }
.c-address { width: 103px; }
.c-phone { width: 77px; }

/* Scroll bars */
.scroll-y {
  grid-area: 1 / 2 / 3 / 3;
  display: flex;
  flex-direction: column;
  margin-top: 24px;
  background-color: #f0f0f0;
  color: #505050;
}

.scroll-x {
  grid-area: 2 / 1 / 3 / 2;
  display: flex;
  background-color: #f0f0f0;
  color: #505050;
}

.scroll-x.inactive {
  color: #bfbfbf;
}

.scroll-x svg,
.scroll-y svg,
.memo-scroll svg {
  width: 17px;
  height: 17px;
}

.track {
  flex: 1;
}

.scroll-y .track {
  display: grid;
  grid-template-rows: 1fr 1fr 1fr;
}

.scroll-y .thumb {
  grid-row: 2;
}

.thumb {
  height: 100%;
  background-color: #cdcdcd;
}

/* Detail form */
.detail {
  display: grid;
  grid-template-columns: minmax(0, 1fr) 24px;
  flex: 1;
  min-height: 0;
  margin-top: 8px;
  font-family: "Liberation Sans", Arial, sans-serif;
  font-size: 11px;
}

.form-panel {
  display: grid;
  grid-template-columns: minmax(0, 1fr) 148px;
  border: 1px solid #a0a0a0;
  border-bottom-width: 2px;
}

.strip {
  padding: 4px;
}

.strip svg {
  width: 16px;
  height: 14px;
}

.form-main {
  display: flex;
  flex-direction: column;
  padding: 9px 2px 1px 1px;
}

.form-head {
  display: flex;
  align-items: center;
  gap: 5px;
  height: 24px;
  padding-left: 9px;
}

.flags {
  display: grid;
  grid-template-columns: 80px 55px 103px 158px 102px 133px;
  gap: 1px;
}

.flags div {
  display: flex;
}

.flags div:nth-child(2) {
  padding-right: 3px;
}

.flags input {
  flex: 1;
  width: 0;
  height: 24px;
  margin-right: -1px;
  padding: 0 1px 1px;
  font-weight: bold;
  text-align: center;
}

.flags input:last-child {
  margin-right: 0;
}

.flags input.on {
  background-color: #32cd32;
  box-shadow: inset 0 0 0 1px #fff;
}

input,
textarea {
  display: block;
  min-width: 0;
  margin: 0;
  padding: 0 3px 1px;
  border: 1px solid #7a7a7a;
  border-radius: 0;
  background-color: #fff;
  font: inherit;
  color: #000;
}

input {
  height: 24px;
}

.tabs {
  display: flex;
  align-items: flex-end;
  height: 24px;
}

.tab-strip {
  display: flex;
  align-items: flex-end;
  flex: 1;
  min-width: 0;
  overflow: hidden;
}

.tab-strip button {
  flex: none;
  min-width: 37px;
  height: 22px;
  padding: 0 3px;
  border: solid #d9d9d9;
  border-width: 1px 1px 0 0;
  text-align: left;
}

.tab-strip .active {
  height: 24px;
  padding: 0 5px 4px;
  border-top: none;
  background-color: #fff;
}

.tab-arrow {
  display: flex;
  align-items: center;
  justify-content: center;
  width: 17px;
  height: 18px;
  margin-bottom: 3px;
  border: 1px solid #adadad;
}

.tab-arrow svg {
  width: 4px;
  height: 8px;
}

.tab-page {
  display: grid;
  grid-template-columns: 679px minmax(0, 1fr);
  gap: 8px;
  align-content: start;
  flex: 1;
  padding: 13px 4px 0 14px;
  border: 1px solid #dcdcdc;
  border-top: none;
  background-color: #fff;
}

fieldset {
  min-width: 0;
  margin: 0;
  border: 1px solid #dcdcdc;
}

legend {
  padding: 0 3px;
  font-weight: bold;
  line-height: 14px;
}

.client {
  padding: 7px 6px 14px 10px;
}

.client legend {
  margin-left: -5px;
}

.project {
  display: flex;
  justify-content: space-between;
  padding: 0 4px 0 23px;
}

.project-fields {
  display: grid;
  grid-template-columns: 97px 259px 22px;
  grid-template-rows: 34px 35px 35px 92px;
}

.project-fields > button {
  padding-left: 6px;
}

.project button {
  align-self: start;
  margin-top: 5px;
}

.line {
  display: flex;
  align-items: flex-start;
  gap: 5px;
}

.line label {
  margin-left: 4px;
}

.w-nr { width: 64px; }
.w-art { width: 32px; margin-left: 1px; }
.w-house { width: 46px; }
.w-land { width: 37px; }
.w-zip { width: 43px; }

.grow {
  flex: 1;
  width: 0;
}

.client label {
  line-height: 20px;
  white-space: nowrap;
}

.highlighted {
  background-color: #ffffe6;
  color: #000080;
}

.memo {
  display: flex;
  padding: 1px;
  border: 1px solid #7a7a7a;
}

.memo textarea {
  flex: 1;
  border: none;
  resize: none;
}

.memo-scroll {
  display: flex;
  flex-direction: column;
  justify-content: space-between;
  background-color: #f0f0f0;
  color: #bfbfbf;
}

.dates {
  display: grid;
  grid-template-columns: 146px 74px 21px;
  grid-template-rows: 34px 35px 35px 35px 34px 23px;
}

.dates button {
  padding-left: 4px;
}

.customer {
  margin-top: 9px;
  padding: 10px 17px 25px 15px;
  border: 1px solid #a0a0a0;
  box-shadow: inset 0 0 0 1px #e8e8e8;
}

.customer h2 {
  margin: 0 0 8px;
  border-bottom: 1px solid #a0a0a0;
  font-size: 11px;
  line-height: 14px;
  color: #6d6d6d;
}

.customer-fields {
  display: grid;
  grid-template-columns: 91px 198px 109px 185px 24px;
  row-gap: 8px;
  padding-left: 11px;
}

.customer-fields > label:nth-of-type(even) {
  padding-left: 13px;
}

.customer-fields button {
  padding-left: 8px;
}

.place-line {
  gap: 2px;
}

.actions {
  display: flex;
  gap: 7px;
  padding: 18px 7px 0 4px;
}

.actions button {
  width: 131px;
  height: 23px;
  border: 1px solid #adadad;
  background-color: #e1e1e1;
}

.actions .long {
  flex: 1;
}

.changes {
  display: flex;
  flex-direction: column;
  padding: 11px 17px 12px 15px;
}

.changes legend {
  margin-left: -10px;
}

.changes-body {
  display: flex;
  align-items: flex-start;
  gap: 11px;
  flex: 1;
}

.changes-body .list {
  flex: 1;
  align-self: stretch;
}

.changes-body > button {
  margin-top: 4px;
}

/* Command column */
.commands {
  display: flex;
  flex-direction: column;
  margin-bottom: 1px;
  padding: 2px 0 0 1px;
  border-left: 1px solid #a0a0a0;
  border-top: 1px solid #b4b4b4;
}

.commands button {
  position: relative;
  height: 22px;
  padding-right: 18px;
}

.commands .more::after {
  content: "";
  position: absolute;
  top: 9px;
  right: 4px;
  border: solid transparent;
  border-width: 4px 4px 0;
  border-top-color: #000;
}

.commands hr {
  width: 143px;
  height: 1px;
  margin: 1px 0 6px;
  border: none;
  background-color: #a0a0a0;
}

/* Bottom bars */
.task-bar {
  display: flex;
  gap: 1px;
  height: 26px;
  padding: 3px 2px 2px;
}

.task-bar a {
  display: flex;
  align-items: center;
  gap: 5px;
  width: 119px;
  padding-left: 2px;
  border: 1px solid transparent;
  white-space: nowrap;
}

.task-bar .active {
  border-color: #99d1ff;
  background-color: #cce8ff;
}

.status-bar {
  display: grid;
  grid-template-columns: 20px 20px 50px 50px 30px 30px 30px 30px 30px 250px 1fr;
  height: 24px;
  padding: 2px 0 1px;
  border-top: 1px solid #d7d7d7;
  background-color: #f0f0f0;
}

.status-bar span {
  border-right: 1px solid #d7d7d7;
  line-height: 20px;
  text-align: center;
}

.status-bar .mandant {
  padding-left: 4px;
  text-align: left;
}
```
